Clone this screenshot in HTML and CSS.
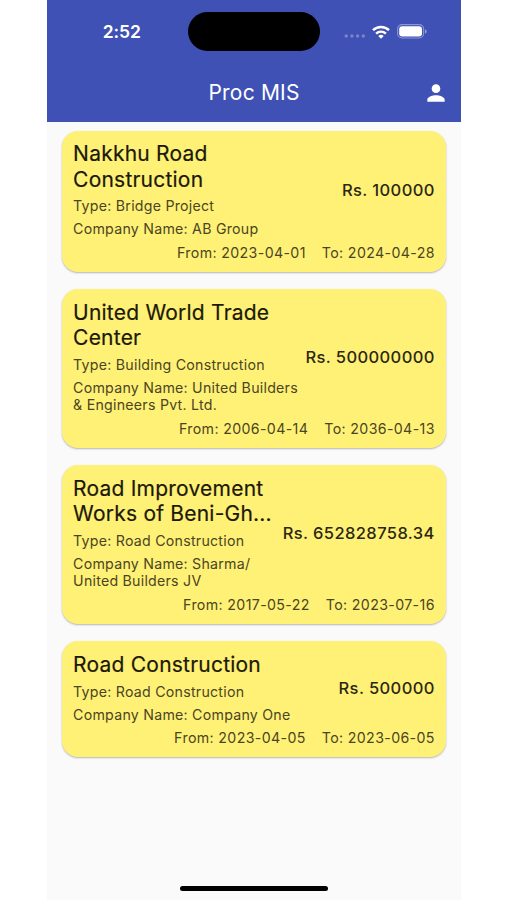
FILE: index.html
```
<!DOCTYPE html>
<html lang="en">
<head>
<meta charset="utf-8">
<meta name="viewport" content="width=device-width, initial-scale=1">
<title>Proc MIS</title>
<link rel="stylesheet" href="styles.css">
</head>
<body>
<div class="phone">
  <header class="header">
    <div class="status-bar">
      <span class="time">2:52</span>
      <div class="island"></div>
      <div class="status-icons">
        <svg class="signal" width="22" height="6" viewBox="0 0 22 6" fill="#fff" fill-opacity=".3">
          <circle cx="2.2" cy="3" r="1.7"/><circle cx="7.9" cy="3" r="1.7"/><circle cx="13.6" cy="3" r="1.7"/><circle cx="19.3" cy="3" r="1.7"/>
        </svg>
        <svg class="wifi" width="18" height="14" viewBox="0 0 18 14" fill="none" stroke="#fff" stroke-width="2.4">
          <path d="M1 5.2a11.5 11.5 0 0 1 16 0"/>
          <path d="M4.1 8.6a7 7 0 0 1 9.8 0"/>
          <path d="M9 13.8L6.3 11.1a3.9 3.9 0 0 1 5.4 0z" fill="#fff" stroke="none"/>
        </svg>
        <svg class="battery" width="30" height="15" viewBox="0 0 30 15">
          <rect x=".6" y=".6" width="26" height="13.4" rx="4.4" fill="none" stroke="#fff" stroke-opacity=".4" stroke-width="1.1"/>
          <rect x="2.2" y="2.2" width="22.8" height="10.2" rx="3" fill="#fff"/>
          <path d="M28 5.2a2.3 2.3 0 0 1 0 4.4z" fill="#fff" fill-opacity=".45"/>
        </svg>
      </div>
    </div>
    <div class="app-bar">
      <h1>Proc MIS</h1>
      <svg class="person" width="26" height="26" viewBox="0 0 24 24" fill="#fff">
        <path d="M12 12c2.21 0 4-1.79 4-4s-1.79-4-4-4-4 1.79-4 4 1.79 4 4 4zm0 2c-2.67 0-8 1.34-8 4v2h16v-2c0-2.66-5.33-4-8-4z"/>
      </svg>
    </div>
  </header>

  <main class="list">
    <article class="card">
      <div class="row">
        <div class="info">
          <h2>Nakkhu Road<br>Construction</h2>
          <p>Type: Bridge Project</p>
          <p>Company Name: AB Group</p>
        </div>
        <div class="price">Rs. 100000</div>
      </div>
      <div class="dates"><span>From: 2023-04-01</span><span>To: 2024-04-28</span></div>
    </article>

    <article class="card">
      <div class="row">
        <div class="info">
          <h2>United World Trade<br>Center</h2>
          <p>Type: Building Construction</p>
          <p>Company Name: United Builders<br>&amp; Engineers Pvt. Ltd.</p>
        </div>
        <div class="price">Rs. 500000000</div>
      </div>
      <div class="dates"><span>From: 2006-04-14</span><span>To: 2036-04-13</span></div>
    </article>

    <article class="card">
      <div class="row">
        <div class="info">
          <h2>Road Improvement<br>Works of Beni-Gh...</h2>
          <p>Type: Road Construction</p>
          <p>Company Name: Sharma/<br>United Builders JV</p>
        </div>
        <div class="price">Rs. 652828758.34</div>
      </div>
      <div class="dates"><span>From: 2017-05-22</span><span>To: 2023-07-16</span></div>
    </article>

    <article class="card">
      <div class="row">
        <div class="info">
          <h2>Road Construction</h2>
          <p>Type: Road Construction</p>
          <p>Company Name: Company One</p>
        </div>
        <div class="price">Rs. 500000</div>
      </div>
      <div class="dates"><span>From: 2023-04-05</span><span>To: 2023-06-05</span></div>
    </article>
  </main>

  <div class="home-bar"></div>
</div>
</body>
</html>
```
FILE: styles.css
```
*{box-sizing:border-box}
html,body{margin:0;height:900px;background:#fff;overflow:hidden}
body{font-family:Inter,"Liberation Sans",sans-serif;color:#2b2713}
h1,h2,p{margin:0;font-weight:400}

.phone{width:414.5px;height:900px;margin-left:46.8px;background:#fafafa;display:flex;flex-direction:column}

/* Header */
.header{height:122.4px;flex:none;background:#3f51b5;color:#fff}
.status-bar{height:63.6px;display:grid;grid-template-columns:141px 132px 1fr;align-items:center}
.time{padding-left:56px;font-size:17.5px;font-weight:600;letter-spacing:-.1px}
.island{height:39px;border-radius:20px;background:#000}
.status-icons{display:flex;align-items:center;padding-left:24px}
.signal{margin-top:9px}
.wifi{margin-left:6px}
.battery{margin-left:7px}
.app-bar{height:58px;padding:0 12px 0 38px;display:flex;align-items:center}
.app-bar h1{flex:1;text-align:center;font-size:21px;line-height:24px;letter-spacing:.2px}

/* Cards */
.list{flex:1;padding:8.4px 15.3px 0;display:flex;flex-direction:column;gap:17.4px}
.card{background:#fff176;border-radius:16px;padding:10.7px 11.5px 10.7px 11px;box-shadow:0 1px 2px rgba(0,0,0,.28);display:flex;flex-direction:column;gap:5.5px;white-space:nowrap}
.row{display:flex;align-items:center;justify-content:space-between}
.info{display:flex;flex-direction:column;gap:5.4px}
.card h2{font-size:21px;line-height:25.3px;letter-spacing:.22px;color:#1c190a;-webkit-text-stroke:.2px #1c190a}
.card p,.dates{font-size:14.2px;line-height:17.6px;letter-spacing:.24px;color:#4a4522}
.price{font-size:16.5px;font-weight:500;line-height:20px;letter-spacing:.4px;margin-right:-.3px}
.card .dates{letter-spacing:.36px;display:flex;justify-content:flex-end;gap:16px;margin-right:-.3px}

.home-bar{width:148px;height:5px;margin:0 auto 9px;border-radius:3px;background:#000}
```
